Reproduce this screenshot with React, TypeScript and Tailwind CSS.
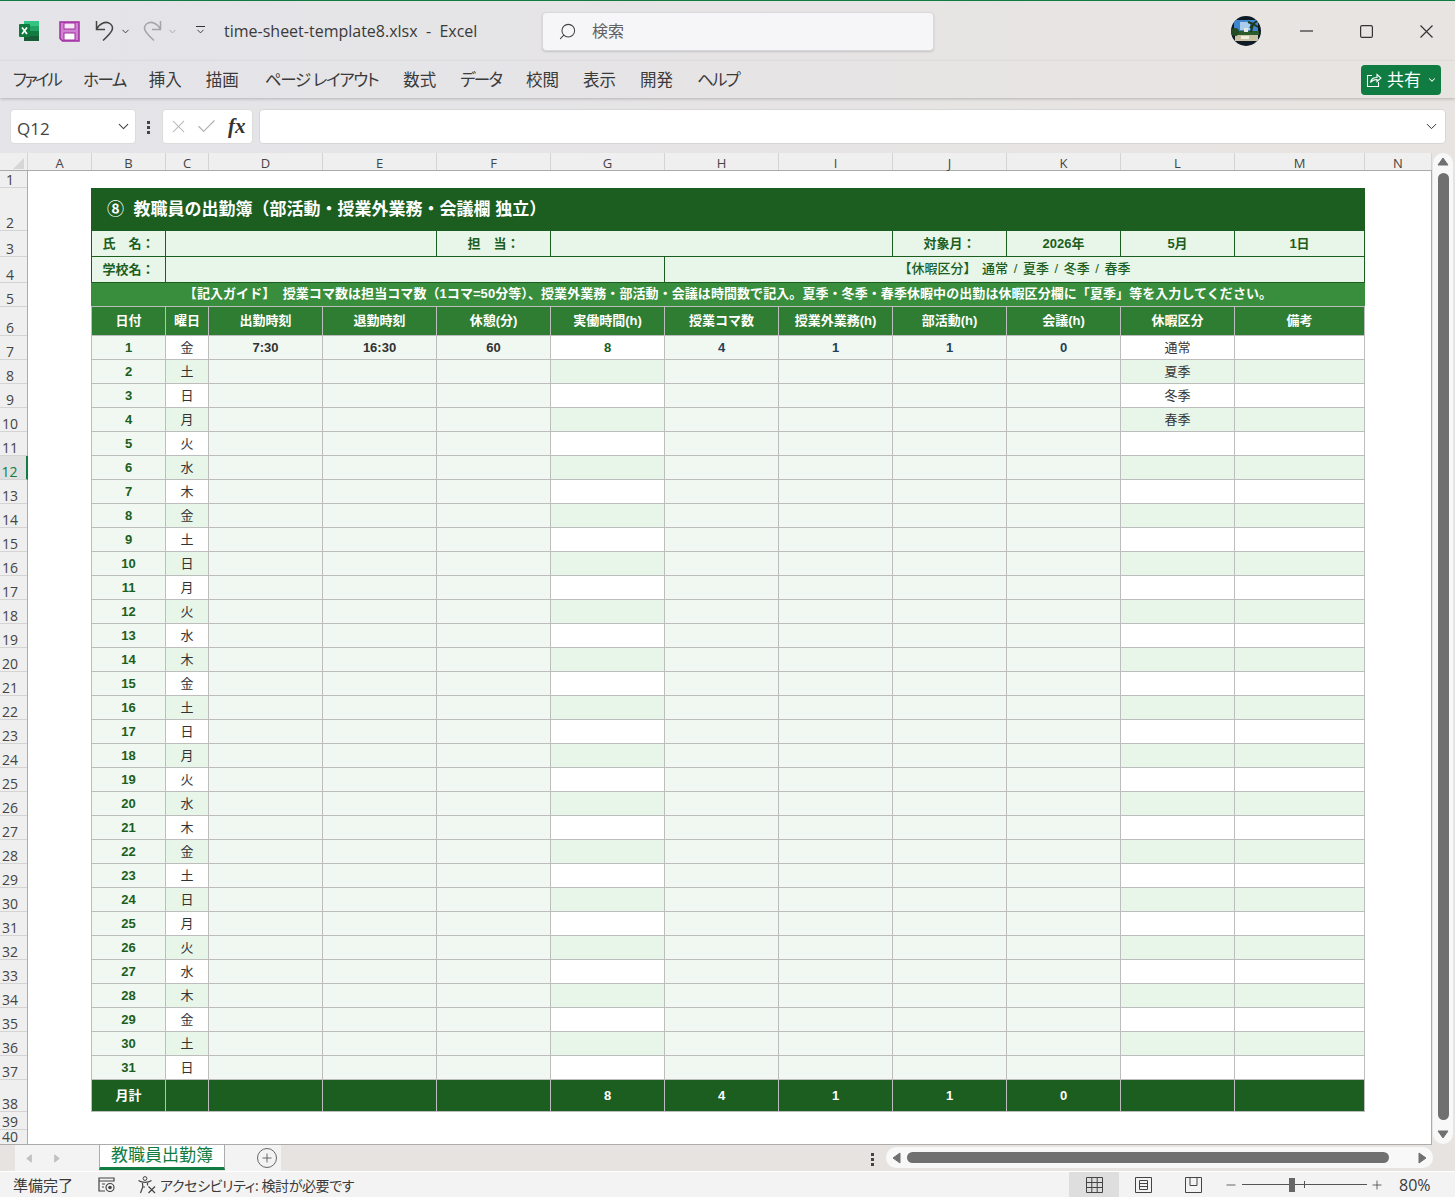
import React from "react";
import { ChevronDown, Minus, Plus, X, Search, Check } from "lucide-react";

const cols = ["A", "B", "C", "D", "E", "F", "G", "H", "I", "J", "K", "L", "M", "N"];
const colW = ["w-[64px]", "w-[74px]", "w-[43px]", "w-[114px]", "w-[114px]", "w-[114px]", "w-[114px]", "w-[114px]", "w-[114px]", "w-[114px]", "w-[114px]", "w-[114px]", "w-[130px]", "w-[67px]"];
const menu: [string, string][] = [
  ["ファイル", "tracking-[-2.5px] -mr-[1px]"],
  ["ホーム", "tracking-[-1.5px] -mr-[1px]"],
  ["挿入", ""],
  ["描画", "pr-[2px]"],
  ["ページ レイアウト", "tracking-[-1.3px] pr-[1px]"],
  ["数式", ""],
  ["データ", "tracking-[-1.8px] pr-[1px]"],
  ["校閲", ""],
  ["表示", ""],
  ["開発", ""],
  ["ヘルプ", "tracking-[-1.8px]"],
];
const heads = ["日付", "曜日", "出勤時刻", "退勤時刻", "休憩(分)", "実働時間(h)", "授業コマ数", "授業外業務(h)", "部活動(h)", "会議(h)", "休暇区分", "備考"];
const week = ["金", "土", "日", "月", "火", "水", "木"];
const kubun = ["通常", "夏季", "冬季", "春季"];
const totals = ["月計", "", "", "", "", "8", "4", "1", "1", "0", "", ""];

const rowNums: [number, string][] = [
  [1, "h-[17px]"], [2, "h-[43px]"], [3, "h-[26px]"], [4, "h-[26px]"], [5, "h-[24px]"], [6, "h-[29px]"],
  ...Array.from({ length: 31 }, (_, i) => [i + 7, "h-[24px]"] as [number, string]),
  [38, "h-[32px]"], [39, "h-[18px]"], [40, "h-[15px]"],
];

function Cell({ className = "", children }: { className?: string; children?: React.ReactNode }) {
  return <div className={"flex items-center justify-center border-r border-b whitespace-pre " + className}>{children}</div>;
}

function Meta({ className = "", children }: { className?: string; children?: React.ReactNode }) {
  return <Cell className={"bg-[#e8f5e9] border-[#1b5e20] text-[#1b5e20] " + className}>{children}</Cell>;
}

function DayRow({ i }: { i: number }) {
  const alt = i % 2 === 0 ? "bg-white" : "bg-[#e8f5e9]";
  const light = "bg-[#f0f8f1] border-[#bdbdbd]";
  const first = i === 0;
  return (
    <>
      <Cell className={light + " border-l text-[#1b5e20]"}>{i + 1}</Cell>
      <Cell className={alt + " border-[#bdbdbd] text-[#333333] font-normal"}>{week[i % 7]}</Cell>
      <Cell className={light + " text-[#333333]"}>{first && "7:30"}</Cell>
      <Cell className={light + " text-[#333333]"}>{first && "16:30"}</Cell>
      <Cell className={light + " text-[#333333]"}>{first && "60"}</Cell>
      <Cell className={alt + " border-[#bdbdbd] text-[#1b5e20]"}>{first && "8"}</Cell>
      <Cell className={light + " text-[#263e5c]"}>{first && "4"}</Cell>
      <Cell className={light + " text-[#263e5c]"}>{first && "1"}</Cell>
      <Cell className={light + " text-[#263e5c]"}>{first && "1"}</Cell>
      <Cell className={light + " text-[#263e5c]"}>{first && "0"}</Cell>
      <Cell className={alt + " border-[#bdbdbd] text-[#333333] font-normal"}>{kubun[i]}</Cell>
      <Cell className={alt + " border-[#bdbdbd]"} />
    </>
  );
}

function ExcelLogo() {
  return (
    <svg width="22" height="22" viewBox="0 0 22 22" className="shrink-0">
      <rect x="6" y="1" width="15" height="5" fill="#33c481" />
      <rect x="6" y="6" width="15" height="5" fill="#21a366" />
      <rect x="6" y="11" width="15" height="5" fill="#107c41" />
      <rect x="6" y="16" width="15" height="5" fill="#185c37" />
      <rect x="1" y="4" width="11" height="13" rx="1" fill="#0f7a3d" />
      <path d="M4 7.5 L9 14 M9 7.5 L4 14" stroke="#ffffff" strokeWidth="1.7" />
    </svg>
  );
}

function SaveIcon() {
  return (
    <svg width="21" height="21" viewBox="0 0 21 21" className="shrink-0">
      <path d="M1 1 H20 V20 H3.5 L1 17.5 Z" fill="#cf82cf" stroke="#a12ca3" strokeWidth="1.5" />
      <rect x="5" y="2" width="11" height="6" fill="#f4e6f4" stroke="#a12ca3" />
      <rect x="5" y="12" width="11" height="7" fill="#ffffff" stroke="#a12ca3" />
    </svg>
  );
}

function UndoIcon({ color, flip }: { color: string; flip?: boolean }) {
  return (
    <svg width="20" height="22" viewBox="0 0 20 22" className={"shrink-0 " + (flip ? "-scale-x-100" : "")}>
      <path d="M1.5 1 V9.5 H10 M1.5 9 C5 3 11 .5 15.5 4 C20 8 17 12 8 20.5" fill="none" stroke={color} strokeWidth="1.5" />
    </svg>
  );
}

function Avatar() {
  return (
    <svg width="30" height="30" viewBox="0 0 30 30" className="shrink-0">
      <defs>
        <clipPath id="av"><circle cx="15" cy="15" r="15" /></clipPath>
      </defs>
      <g clipPath="url(#av)">
        <rect width="30" height="30" fill="#0e1a24" />
        <rect x="3" y="4" width="24" height="13" fill="#3f86cf" />
        <rect x="9" y="6" width="10" height="8" fill="#a9cdea" />
        <rect x="2" y="15" width="26" height="4" fill="#2d5a2a" />
        <rect x="4" y="19" width="23" height="6" fill="#c9c2a4" />
        <path d="M20 16 L22 8 M22 8 L17 6 M22 8 L26 5 M22 8 L27 11 M22 8 L19 12" stroke="#1d3a1d" strokeWidth="2" fill="none" />
        <circle cx="4" cy="16" r="4" fill="#234a22" />
        <rect x="13" y="12" width="4" height="4" fill="#e6e6e6" />
        <rect x="10" y="20" width="8" height="3" fill="#f0ece0" />
      </g>
    </svg>
  );
}

function ShareIcon() {
  return (
    <svg width="16" height="16" viewBox="0 0 16 16" className="shrink-0">
      <path d="M6 3.5 H1.5 V14.5 H12.5 V10 M4.5 10.5 C5 7 8 5.5 11 5.5 L11 2.5 L15 6 L11 9.5 L11 7.5 C8 7.5 6 8.5 4.5 10.5 Z" fill="none" stroke="#ffffff" strokeWidth="1.1" />
    </svg>
  );
}

function Dots() {
  return (
    <div className="flex flex-col gap-[2px] shrink-0">
      <div className="w-[3px] h-[3px] bg-[#444444]" />
      <div className="w-[3px] h-[3px] bg-[#444444]" />
      <div className="w-[3px] h-[3px] bg-[#444444]" />
    </div>
  );
}

function Arrow({ d, color = "#707070", size = 12 }: { d: string; color?: string; size?: number }) {
  return (
    <svg width={size} height={size} viewBox="0 0 12 12" className="shrink-0">
      <path d={d} fill={color} stroke={color} strokeLinejoin="round" />
    </svg>
  );
}

export default function App() {
  return (
    <div className="w-[1455px] h-[1197px] overflow-hidden flex flex-col bg-gradient-to-r from-[#e4e4e9] to-[#e8e4e1] font-['Open_Sans','Noto_Sans_CJK_JP',sans-serif] text-[#333333] [font-feature-settings:'palt']">
      {/* title bar */}
      <div className="h-[1px] bg-[#107c41] shrink-0" />
      <div className="h-[60px] flex items-center shrink-0">
        <div className="ml-[18px]"><ExcelLogo /></div>
        <div className="ml-[19px]"><SaveIcon /></div>
        <div className="ml-[15px]"><UndoIcon color="#444444" /></div>
        <ChevronDown size={11} className="ml-[5px] text-[#333333] shrink-0" strokeWidth={2} />
        <div className="ml-[11px]"><UndoIcon color="#a5a5a5" flip /></div>
        <ChevronDown size={11} className="ml-[5px] text-[#a5a5a5] shrink-0" strokeWidth={2} />
        <div className="ml-[17px] flex flex-col items-center shrink-0">
          <div className="w-[9px] h-[1px] bg-[#333333]" />
          <ChevronDown size={11} className="-mt-[1px] text-[#333333]" strokeWidth={2} />
        </div>
        <div className="ml-[18px] w-[318px] text-[16px] whitespace-pre text-[#3a3a3a] shrink-0">time-sheet-template8.xlsx  -  Excel</div>
        <div className="w-[392px] h-[39px] bg-[#f6f6f8] border border-[#d8d8da] rounded-[4px] shadow-[0_1px_2px_rgba(0,0,0,0.15)] flex items-center pl-[15px] gap-[15px] text-[16px] text-[#616161] shrink-0">
          <Search size={19} strokeWidth={1.3} className="-scale-x-100 text-[#444444]" />
          <span>検索</span>
        </div>
        <div className="ml-[297px]"><Avatar /></div>
        <svg width="13" height="13" viewBox="0 0 13 13" className="ml-[39px] shrink-0">
          <path d="M0 6 H13" stroke="#333333" strokeWidth="1.2" />
        </svg>
        <svg width="13" height="13" viewBox="0 0 13 13" className="ml-[47px] shrink-0">
          <rect x=".6" y=".6" width="11.8" height="11.8" rx="1.5" fill="none" stroke="#333333" strokeWidth="1.2" />
        </svg>
        <svg width="13" height="13" viewBox="0 0 13 13" className="ml-[47px] shrink-0">
          <path d="M.5 .5 L12.5 12.5 M12.5 .5 L.5 12.5" stroke="#333333" strokeWidth="1.2" />
        </svg>
      </div>
      {/* menu */}
      <div className="h-[37px] flex items-start shrink-0 shadow-[0_1px_3px_rgba(0,0,0,0.22)] z-10">
        <div className="ml-[13px] w-[1335px] h-[30px] mt-[4px] flex items-center gap-6 text-[16.5px] text-[#3a3a3a] shrink-0">
          {menu.map(([m, c]) => (
            <span key={m} className={"whitespace-pre " + c}>{m}</span>
          ))}
        </div>
        <div className="ml-[13px] w-[80px] h-[30px] mt-[4px] bg-[#107c41] rounded-[4px] flex items-center pl-[5px] text-white text-[17px] shrink-0">
          <ShareIcon />
          <span className="ml-[5px]">共有</span>
          <ChevronDown size={10} strokeWidth={2.5} className="ml-[6px]" />
        </div>
      </div>
      {/* formula bar */}
      <div className="h-[55px] shrink-0 flex items-start pt-[11px]">
        <div className="ml-[10px] w-[126px] h-[35px] bg-white border border-[#dcdcdc] rounded-[4px] flex items-center justify-between pl-[6px] pr-[3px] text-[17px] text-[#444444] shrink-0">
          <span className="pt-[4px]">Q12</span>
          <ChevronDown size={17} strokeWidth={1.5} />
        </div>
        <div className="ml-[11px] mt-[12px]"><Dots /></div>
        <div className="ml-[12px] w-[91px] h-[35px] bg-white border border-[#dcdcdc] rounded-[4px] flex items-center pl-[5px] text-[#b0b0b0] shrink-0">
          <X size={21} strokeWidth={1.2} />
          <Check size={23} strokeWidth={1.2} className="ml-[6px]" />
          <span className="ml-[10px] font-['Liberation_Serif',serif] italic font-bold text-[21px] text-[#333333]">fx</span>
        </div>
        <div className="ml-[6px] w-[1187px] h-[35px] bg-white border border-[#d6d6d6] rounded-[4px] flex items-center justify-end pr-[5px] shrink-0">
          <ChevronDown size={17} strokeWidth={1.4} />
        </div>
      </div>
      {/* sheet + vertical scrollbar */}
      <div className="h-[992px] flex shrink-0">
        <div className="w-[1432px] flex flex-col border-r border-[#acacac]">
          <div className="h-[18px] flex shrink-0 bg-[#efefef] border-b border-[#acacac] text-[13px] text-[#444444]">
            <div className="w-[28px] h-full border-r border-[#d4d4d4] flex items-end justify-end pb-[1px] pr-[3px] shrink-0">
              <svg width="12" height="12" viewBox="0 0 12 12"><path d="M12 1 V12 H1 Z" fill="#d6d6d6" /></svg>
            </div>
            {cols.map((c, i) => (
              <div key={c} className={"h-full border-r border-[#d4d4d4] flex items-center justify-center pt-[3px] leading-[14px] shrink-0 " + colW[i]}>{c}</div>
            ))}
          </div>
          <div className="h-[974px] flex overflow-hidden bg-white border-b border-[#acacac]">
            <div className="w-[28px] shrink-0 bg-[#efefef] border-r border-[#acacac] text-[14px] text-[#444444]">
              {rowNums.map(([n, h]) => (
                <div key={n} className={h + " border-b border-[#d4d4d4] flex items-end justify-center pr-[7px] leading-[14px] " + (n === 12 ? "bg-[#e0e0e0] text-[#107c41] border-r-2 border-r-[#107c41] -mr-[1px]" : "")}>
                  {n}
                </div>
              ))}
            </div>
            <div className="pl-[63px] pt-[17px] font-['Liberation_Sans','Noto_Sans_CJK_JP',sans-serif] [font-feature-settings:normal] text-[13px] font-bold">
              <div className="grid grid-cols-[75px_43px_repeat(9,114px)_130px] grid-rows-[43px_26px_26px_24px_29px_repeat(31,24px)_32px]">
                <div className="col-span-12 bg-[#1b5e20] text-white text-[17px] flex items-center pl-[16px] whitespace-pre">⑧  教職員の出勤簿（部活動・授業外業務・会議欄 独立）</div>

                <Meta className="border-l">氏　名：</Meta>
                <Meta className="col-span-3" />
                <Meta>担　当：</Meta>
                <Meta className="col-span-3" />
                <Meta>対象月：</Meta>
                <Meta>2026年</Meta>
                <Meta>5月</Meta>
                <Meta>1日</Meta>

                <Meta className="border-l">学校名：</Meta>
                <Meta className="col-span-5" />
                <Meta className="col-span-6 font-medium [word-spacing:2px] pb-[2px]">【休暇区分】 通常 / 夏季 / 冬季 / 春季</Meta>

                <div className="col-span-12 bg-[#388e3c] text-white border-b border-[#bdbdbd] flex items-center justify-center whitespace-pre pb-[2px] tracking-[0.07px]">【記入ガイド】  授業コマ数は担当コマ数（1コマ=50分等）、授業外業務・部活動・会議は時間数で記入。夏季・冬季・春季休暇中の出勤は休暇区分欄に「夏季」等を入力してください。</div>

                {heads.map((h, i) => (
                  <Cell key={h} className={"bg-[#2e7d32] border-[#bdbdbd] text-white " + (i === 0 ? "border-l" : "")}>{h}</Cell>
                ))}

                {Array.from({ length: 31 }, (_, i) => (
                  <DayRow key={i} i={i} />
                ))}

                {totals.map((t, i) => (
                  <Cell key={i} className={"bg-[#1b5e20] border-[#bdbdbd] text-white " + (i === 0 ? "border-l" : "")}>{t}</Cell>
                ))}
              </div>
            </div>
          </div>
        </div>
        <div className="w-[23px] pl-[1px] pr-[2px]">
          <div className="w-full h-[991px] bg-[#f8f8f8] rounded-[10px] flex flex-col items-center pt-[3px] pb-[2px]">
            <Arrow d="M6 2 L11 9 H1 Z" />
            <div className="w-[11px] h-[947px] mt-[5px] bg-[#707070] rounded-[6px]" />
            <div className="mt-[8px]"><Arrow d="M1 3 H11 L6 10 Z" /></div>
          </div>
        </div>
      </div>
      {/* sheet tabs */}
      <div className="h-[27px] flex shrink-0 bg-[#e6e3e1] border-b border-white">
        <div className="ml-[15px] w-[84px] bg-[#f3f3f3] flex items-center pl-[9px] gap-[16px] shrink-0">
          <Arrow d="M8 2 V10 L3 6 Z" color="#c0c0c0" size={11} />
          <Arrow d="M4 2 V10 L9 6 Z" color="#c0c0c0" size={11} />
        </div>
        <div className="w-[126px] h-[26px] bg-white border-x border-t border-[#acacac] border-b-[3px] border-b-[#107c41] flex items-center justify-center text-[17px] text-[#107c41] pb-[3px] -mt-[1px] shrink-0">
          教職員出勤簿
        </div>
        <div className="w-[56px] bg-[#f3f3f3] flex items-center pl-[32px] shrink-0">
          <div className="w-[20px] h-[20px] shrink-0 rounded-full border border-[#666666] flex items-center justify-center">
            <Plus size={14} strokeWidth={1.5} className="text-[#555555]" />
          </div>
        </div>
        <div className="ml-[590px] mt-[8px]"><Dots /></div>
        <div className="ml-[12px] w-[547px] h-[21px] mt-[2px] bg-[#f8f8f8] rounded-[10px] flex items-center pl-[5px] shrink-0">
          <Arrow d="M9 1 V11 L2 6 Z" />
          <div className="ml-[4px] w-[482px] h-[11px] bg-[#707070] rounded-[6px]" />
          <div className="ml-[27px]"><Arrow d="M3 1 V11 L10 6 Z" /></div>
        </div>
      </div>
      {/* status bar */}
      <div className="flex-1 bg-[#f3f3f3] flex items-center text-[14px] text-[#3a3a3a]">
        <span className="ml-[13px] w-[85px] text-[15px] pt-[1px] shrink-0">準備完了</span>
        <svg width="18" height="16" viewBox="0 0 18 16" className="shrink-0">
          <path d="M1 1 H16 V4 H1 Z M1 4 V14 H7 M4 7 H7 M4 10 H6" fill="none" stroke="#444444" strokeWidth="1.2" />
          <circle cx="12" cy="10.5" r="4" fill="none" stroke="#444444" strokeWidth="1.2" />
          <circle cx="12" cy="10.5" r="1.8" fill="#444444" />
        </svg>
        <svg width="18" height="18" viewBox="0 0 18 18" className="ml-[22px] shrink-0">
          <circle cx="7" cy="2.5" r="1.9" fill="none" stroke="#444444" />
          <path d="M.5 4.5 C4 7 10 7 13.5 4.5 M4.5 7 L4.8 11 L2.5 17 M9.5 7 V9.5 M10.5 10.5 L17 17 M17 10.5 L10.5 17 M4.8 11 H7" fill="none" stroke="#444444" strokeWidth="1.2" />
        </svg>
        <span className="ml-[4px] w-[909px] whitespace-pre tracking-[-0.4px] pt-[1px] shrink-0">アクセシビリティ: 検討が必要です</span>
        <div className="w-[50px] h-full bg-[#dedede] flex items-center justify-center shrink-0">
          <svg width="17" height="16" viewBox="0 0 17 16">
            <path d="M.5 .5 H16.5 V15.5 H.5 Z M.5 5.5 H16.5 M.5 10.5 H16.5 M5.8 .5 V15.5 M11.2 .5 V15.5" fill="none" stroke="#444444" />
          </svg>
        </div>
        <svg width="17" height="16" viewBox="0 0 17 16" className="ml-[16px] shrink-0">
          <path d="M.5 .5 H16.5 V15.5 H.5 Z M4.5 3.5 H12.5 V12.5 H4.5 Z M4.5 6.5 H12.5 M4.5 9.5 H12.5" fill="none" stroke="#444444" />
        </svg>
        <svg width="17" height="16" viewBox="0 0 17 16" className="ml-[33px] shrink-0">
          <path d="M.5 .5 H16.5 V15.5 H.5 Z M5 .5 V8.5 H12 V.5" fill="none" stroke="#444444" />
        </svg>
        <Minus size={14} strokeWidth={1.3} className="ml-[22px] shrink-0" />
        <div className="ml-[4px] w-[125px] h-[14px] flex items-center shrink-0">
          <div className="w-[47px] h-[1px] bg-[#555555]" />
          <div className="w-[6px] h-[14px] bg-[#666666]" />
          <div className="w-[9px] h-[1px] bg-[#555555]" />
          <div className="w-[1px] h-[7px] bg-[#555555]" />
          <div className="w-[62px] h-[1px] bg-[#555555]" />
        </div>
        <Plus size={14} strokeWidth={1.3} className="ml-[3px] shrink-0" />
        <span className="ml-[15px] text-[16px] pt-[1px] whitespace-pre">80%</span>
      </div>
    </div>
  );
}
